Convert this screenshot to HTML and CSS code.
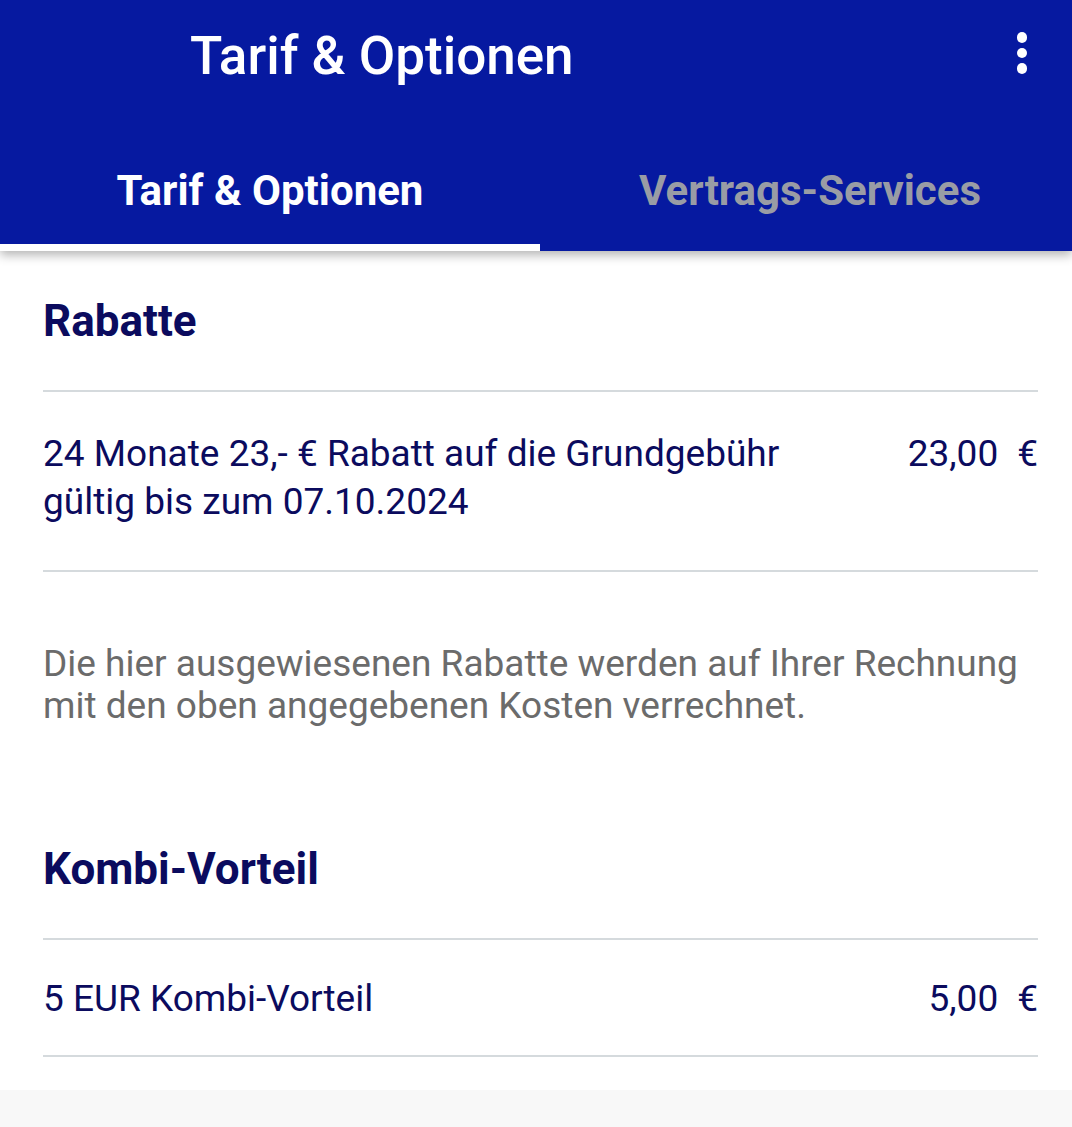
FILE: index.html
```html
<!DOCTYPE html>
<html lang="de">
<head>
    <meta charset="UTF-8">
    <meta name="viewport" content="width=device-width, initial-scale=1.0">
    <title>Tarif &amp; Optionen</title>
    <link rel="stylesheet" href="styles.css">
</head>
<body>

    <header class="app-bar">
        <div class="toolbar">
            <h1>Tarif &amp; Optionen</h1>
            <div class="menu-btn"><span></span><span></span><span></span></div>
        </div>
        <nav class="tabs">
            <div class="tab active">Tarif &amp; Optionen</div>
            <div class="tab">Vertrags-Services</div>
        </nav>
    </header>

    <main class="content">
        <section class="block">
            <h2>Rabatte</h2>
            <div class="row">
                <div class="row-text">24 Monate 23,- € Rabatt auf die Grundgebühr<br>gültig bis zum 07.10.2024</div>
                <div class="row-price"><span>23,00</span><span>€</span></div>
            </div>
            <p class="note">Die hier ausgewiesenen Rabatte werden auf Ihrer Rechnung mit den oben angegebenen Kosten verrechnet.</p>
        </section>

        <section class="block">
            <h2>Kombi-Vorteil</h2>
            <div class="row single">
                <div class="row-text">5 EUR Kombi-Vorteil</div>
                <div class="row-price"><span>5,00</span><span>€</span></div>
            </div>
        </section>
    </main>

    <div class="footer-space"></div>

</body>
</html>
```

FILE: styles.css
```css
* { margin: 0; padding: 0; box-sizing: border-box; }
body { font-family: Roboto, 'Noto Sans', sans-serif; background: #fff; color: #0b0b5e; }

.app-bar { background: #0619a0; color: white; box-shadow: 0 4px 10px rgba(0, 0, 0, 0.3); position: relative; z-index: 1; }
.toolbar { height: 120px; display: flex; align-items: flex-start; justify-content: space-between; padding: 26px 45px 0 190px; }
.toolbar h1 { font-size: 53px; font-weight: 500; line-height: 60px; }
.menu-btn { display: flex; flex-direction: column; gap: 5px; padding-top: 6px; }
.menu-btn span { width: 10.5px; height: 10.5px; background: white; border-radius: 50%; }

.tabs { display: flex; height: 131px; }
.tab { flex: 1; display: flex; align-items: center; justify-content: center; font-size: 42px; font-weight: 700; color: #999ca5; padding-top: 17px; padding-left: 8px; border-bottom: 7px solid transparent; }
.tab.active { flex: 0 0 540px; padding-left: 0; color: white; border-bottom-color: white; }

.content { padding: 40px 34px 0 43px; }
.block h2 { font-size: 44px; font-weight: 700; line-height: 60px; padding-bottom: 39px; border-bottom: 2px solid #d5dadd; }
.row { display: flex; justify-content: space-between; align-items: flex-start; padding: 38px 0 44px; border-bottom: 2px solid #d5dadd; font-size: 37px; line-height: 48px; }
.row.single { padding: 35px 0 32px; }
.row-price { display: flex; gap: 19px; }
.note { font-size: 37px; line-height: 42px; color: #6b6b6b; padding-top: 71px; }
.block + .block { margin-top: 112px; }

.footer-space { margin-top: 33px; height: 40px; background: #f8f8f8; }
```
